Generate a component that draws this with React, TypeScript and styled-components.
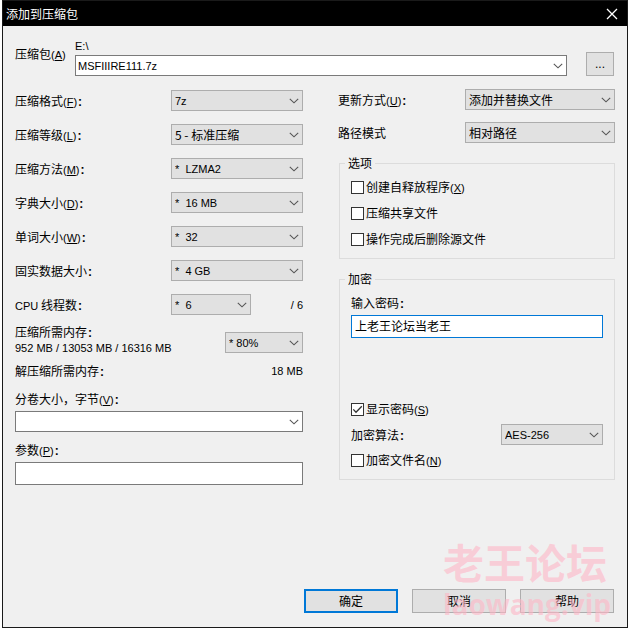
import React, { useState } from "react";
import styled, { createGlobalStyle } from "styled-components";

const cjk = `"Noto Sans CJK SC", sans-serif`;
const latin = `"Liberation Sans", "Noto Sans CJK SC", sans-serif`;

const GlobalStyle = createGlobalStyle`
  *, *::before, *::after { box-sizing: border-box; }
  body {
    margin: 0;
    background: #fff;
    color: #000;
    font: 12px/16px ${cjk};
  }
  button, input, select { font: inherit; color: inherit; margin: 0; border-radius: 0; }
`;

const Page = styled.div`
  display: flex;
  min-height: 100vh;
  padding: 0 2px 2px;
`;

const Dialog = styled.main`
  position: relative;
  flex: 1;
  min-width: 0;
  display: flex;
  flex-direction: column;
  background: #f0f0f0;
  border: 1px solid #1a1a1a;
`;

const TitleBar = styled.header`
  display: flex;
  align-items: center;
  justify-content: space-between;
  height: 25px;
  padding: 0 9px 0 3px;
  background: #000;
  color: #fff;
`;

const Title = styled.h1`
  margin: 0;
  font-size: 12px;
  font-weight: 400;
`;

const CloseButton = styled.button`
  display: flex;
  padding: 0;
  border: 0;
  background: none;
  color: #fff;
`;

const Content = styled.div`
  flex: 1;
  display: flex;
  flex-direction: column;
  padding: 12px;
`;

const ArchiveRow = styled.div`
  display: grid;
  grid-template-columns: 60px minmax(0, 1fr) 28px;
  margin: 0 1px 13px 0;
`;

const ArchiveLabel = styled.label`
  padding-top: 8px;
`;

const PathField = styled.div`
  display: flex;
  flex-direction: column;
  gap: 1px;
  margin-right: 19px;
`;

const Columns = styled.div`
  display: grid;
  grid-template-columns: minmax(0, 288fr) minmax(0, 277fr);
  column-gap: 35px;
`;

const LeftColumn = styled.div`
  display: flex;
  flex-direction: column;
  padding-top: 1px;
`;

const RightColumn = styled.div`
  display: flex;
  flex-direction: column;
  gap: 12px;
`;

const FieldList = styled.div`
  display: flex;
  flex-direction: column;
  gap: 13px;
`;

const Row = styled.div`
  display: flex;
  align-items: center;
  justify-content: space-between;
`;

const CpuControls = styled.div`
  display: flex;
  align-items: center;
  justify-content: space-between;
  width: 132px;
`;

const MemoryRow = styled.div`
  display: flex;
  justify-content: space-between;
  align-items: flex-end;
  margin: 9px 0 7px;
`;

const MemorySelect = styled.div`
  padding-bottom: 3px;
`;

const Stack = styled.div<{ $top: number }>`
  display: flex;
  flex-direction: column;
  gap: 4px;
  margin-top: ${(p) => p.$top}px;
`;

const Latin = styled.span`
  font-family: ${latin};
  font-size: 11px;
  line-height: 8px;
`;

const LatinLine = styled.div`
  font-family: ${latin};
  font-size: 11px;
  line-height: 16px;
`;

const Colon = styled.b`
  font-family: ${latin};
  font-size: 12px;
  line-height: 8px;
  padding-left: 1px;
`;

const SelectFrame = styled.div<{ $width: number }>`
  display: grid;
  align-items: center;
  width: ${(p) => p.$width}px;

  & > * { grid-area: 1 / 1; }
  & > svg { justify-self: end; margin-right: 4px; pointer-events: none; }
`;

const NativeSelect = styled.select<{ $cjk?: boolean }>`
  appearance: none;
  width: 100%;
  height: 21px;
  padding: 0 18px 0 3px;
  border: 1px solid #adadad;
  background: #e1e1e1;
  outline: none;
  font-family: ${(p) => (p.$cjk ? cjk : latin)};
  font-size: ${(p) => (p.$cjk ? 12 : 11)}px;
`;

const TextBox = styled.input<{ $focus?: boolean }>`
  width: 100%;
  height: 23px;
  padding: 0 3px 2px;
  border: 1px solid ${(p) => (p.$focus ? "#0078d7" : "#7a7a7a")};
  background: #fff;
  outline: none;
`;

const ComboFrame = styled.div`
  display: flex;
  height: 21px;
  border: 1px solid #7a7a7a;
  background: #fff;
`;

const ComboInput = styled.input`
  flex: 1;
  min-width: 0;
  padding: 0 2px;
  border: 0;
  outline: none;
  background: none;
  font-family: ${latin};
  font-size: 11px;
`;

const ComboToggle = styled.button`
  display: flex;
  align-items: center;
  padding: 0 3px 0 0;
  border: 0;
  background: none;
`;

const Group = styled.fieldset`
  min-width: 0;
  margin: 0 0 0 1px;
  padding: 8px 11px 11px;
  border: 1px solid #dcdcdc;
`;

const Legend = styled.legend`
  margin-left: -6px;
  padding: 0 3px;
`;

const OptionList = styled.div`
  display: flex;
  flex-direction: column;
  gap: 10px;
`;

const CheckLabel = styled.label`
  display: flex;
  align-items: center;
  gap: 2px;
`;

const CheckFrame = styled.span`
  display: grid;
  width: 13px;
  height: 13px;

  & > * { grid-area: 1 / 1; }
  & > svg { pointer-events: none; }
`;

const NativeCheck = styled.input`
  appearance: none;
  width: 13px;
  height: 13px;
  border: 1px solid #333;
  background: #fff;
`;

const Encryption = styled.div`
  display: flex;
  flex-direction: column;
  gap: 7px;
`;

const PasswordField = styled.div`
  display: flex;
  flex-direction: column;
  gap: 4px;
  margin-bottom: 56px;
`;

const Footer = styled.footer`
  display: flex;
  justify-content: flex-end;
  gap: 14px;
  margin-top: auto;
  padding: 0 1px 2px 0;
`;

const PushButton = styled.button<{ $primary?: boolean }>`
  width: 94px;
  height: 24px;
  padding: 0;
  border: ${(p) => (p.$primary ? "2px solid #0078d7" : "1px solid #adadad")};
  background: #e1e1e1;
`;

const BrowseButton = styled(PushButton)`
  align-self: end;
  width: 28px;
  font-family: ${latin};
`;

const Watermark = styled.div`
  position: absolute;
  right: 16px;
  bottom: 5px;
  display: flex;
  flex-direction: column;
  color: rgba(255, 182, 198, 0.6);
  font-weight: 700;
  white-space: nowrap;
  pointer-events: none;
`;

const WatermarkName = styled.span`
  font-size: 41px;
  line-height: 50px;
`;

const WatermarkSite = styled.span`
  font-family: "Open Sans", sans-serif;
  font-size: 28px;
  line-height: 36px;
`;

const Chevron = () => (
  <svg width="10" height="6" viewBox="0 0 10 6" fill="none" stroke="#555" strokeWidth="1.1" aria-hidden="true">
    <path d="M0.8 0.8 L5 4.8 L9.2 0.8" />
  </svg>
);

const Key = ({ children, colon = true }: { children: string; colon?: boolean }) => (
  <>
    <Latin>
      (<u>{children}</u>)
    </Latin>
    {colon && <Colon>:</Colon>}
  </>
);

interface SelectProps {
  id: string;
  value: string;
  width: number;
  cjk?: boolean;
  label?: string;
}

const Select = ({ id, value, width, cjk: isCjk, label }: SelectProps) => (
  <SelectFrame $width={width}>
    <NativeSelect id={id} $cjk={isCjk} aria-label={label}>
      <option>{value}</option>
    </NativeSelect>
    <Chevron />
  </SelectFrame>
);

interface CheckProps {
  children: React.ReactNode;
  initial?: boolean;
}

const Check = ({ children, initial = false }: CheckProps) => {
  const [checked, setChecked] = useState(initial);
  return (
    <CheckLabel>
      <CheckFrame>
        <NativeCheck type="checkbox" checked={checked} onChange={() => setChecked(!checked)} />
        {checked && (
          <svg width="13" height="13" viewBox="0 0 13 13" fill="none" stroke="#333" strokeWidth="1.3" aria-hidden="true">
            <path d="M2.3 6.4 L5 9.2 L10.8 3.2" />
          </svg>
        )}
      </CheckFrame>
      <span>{children}</span>
    </CheckLabel>
  );
};

const fields = [
  { id: "format", text: "压缩格式", hotkey: "F", value: "7z" },
  { id: "level", text: "压缩等级", hotkey: "L", value: "5 - 标准压缩", cjk: true },
  { id: "method", text: "压缩方法", hotkey: "M", value: "*\u00a0 LZMA2" },
  { id: "dictionary", text: "字典大小", hotkey: "D", value: "*\u00a0 16 MB" },
  { id: "word", text: "单词大小", hotkey: "W", value: "*\u00a0 32" },
  { id: "solid", text: "固实数据大小", value: "*\u00a0 4 GB" },
];

export default function App() {
  const [archive, setArchive] = useState("MSFIIIRE111.7z");
  const [password, setPassword] = useState("上老王论坛当老王");

  return (
    <Page>
      <GlobalStyle />
      <Dialog>
        <TitleBar>
          <Title>添加到压缩包</Title>
          <CloseButton aria-label="关闭">
            <svg width="12" height="12" viewBox="0 0 12 12" fill="none" stroke="currentColor" strokeWidth="1.3">
              <path d="M1 1 L11 11 M11 1 L1 11" />
            </svg>
          </CloseButton>
        </TitleBar>

        <Content>
          <ArchiveRow>
            <ArchiveLabel htmlFor="archive">
              压缩包<Key colon={false}>A</Key>
            </ArchiveLabel>
            <PathField>
              <LatinLine>E:\</LatinLine>
              <ComboFrame>
                <ComboInput id="archive" value={archive} onChange={(e) => setArchive(e.target.value)} />
                <ComboToggle aria-label="展开">
                  <Chevron />
                </ComboToggle>
              </ComboFrame>
            </PathField>
            <BrowseButton>...</BrowseButton>
          </ArchiveRow>

          <Columns>
            <LeftColumn>
              <FieldList>
                {fields.map((f) => (
                  <Row key={f.id}>
                    <label htmlFor={f.id}>
                      {f.text}
                      {f.hotkey ? <Key>{f.hotkey}</Key> : <Colon>:</Colon>}
                    </label>
                    <Select id={f.id} value={f.value} width={132} cjk={f.cjk} />
                  </Row>
                ))}
                <Row>
                  <label htmlFor="threads">
                    <Latin>CPU</Latin> 线程数<Colon>:</Colon>
                  </label>
                  <CpuControls>
                    <Select id="threads" value={"*\u00a0 6"} width={80} />
                    <LatinLine>/ 6</LatinLine>
                  </CpuControls>
                </Row>
              </FieldList>

              <MemoryRow>
                <div>
                  <div>
                    压缩所需内存<Colon>:</Colon>
                  </div>
                  <LatinLine>952 MB / 13053 MB / 16316 MB</LatinLine>
                </div>
                <MemorySelect>
                  <Select id="memory" value="* 80%" width={78} label="压缩所需内存" />
                </MemorySelect>
              </MemoryRow>
              <Row>
                <span>
                  解压缩所需内存<Colon>:</Colon>
                </span>
                <LatinLine>18 MB</LatinLine>
              </Row>

              <Stack $top={12}>
                <label htmlFor="volume">
                  分卷大小，字节<Key>V</Key>
                </label>
                <ComboFrame>
                  <ComboInput id="volume" />
                  <ComboToggle aria-label="展开">
                    <Chevron />
                  </ComboToggle>
                </ComboFrame>
              </Stack>
              <Stack $top={10}>
                <label htmlFor="parameters">
                  参数<Key>P</Key>
                </label>
                <TextBox id="parameters" />
              </Stack>
            </LeftColumn>

            <RightColumn>
              <Row>
                <label htmlFor="update">
                  更新方式<Key>U</Key>
                </label>
                <Select id="update" value="添加并替换文件" width={150} cjk />
              </Row>
              <Row>
                <label htmlFor="paths">路径模式</label>
                <Select id="paths" value="相对路径" width={150} cjk />
              </Row>

              <Group>
                <Legend>选项</Legend>
                <OptionList>
                  <Check>
                    创建自释放程序<Key colon={false}>X</Key>
                  </Check>
                  <Check>压缩共享文件</Check>
                  <Check>操作完成后删除源文件</Check>
                </OptionList>
              </Group>

              <Group>
                <Legend>加密</Legend>
                <Encryption>
                  <PasswordField>
                    <label htmlFor="password">
                      输入密码<Colon>:</Colon>
                    </label>
                    <TextBox
                      id="password"
                      $focus
                      value={password}
                      onChange={(e) => setPassword(e.target.value)}
                    />
                  </PasswordField>
                  <Check initial>
                    显示密码<Key colon={false}>S</Key>
                  </Check>
                  <Row>
                    <label htmlFor="algorithm">
                      加密算法<Colon>:</Colon>
                    </label>
                    <Select id="algorithm" value="AES-256" width={102} />
                  </Row>
                  <Check>
                    加密文件名<Key colon={false}>N</Key>
                  </Check>
                </Encryption>
              </Group>
            </RightColumn>
          </Columns>

          <Footer>
            <PushButton $primary>确定</PushButton>
            <PushButton>取消</PushButton>
            <PushButton>帮助</PushButton>
          </Footer>
        </Content>

        <Watermark aria-hidden="true">
          <WatermarkName>老王论坛</WatermarkName>
          <WatermarkSite>laowang.vip</WatermarkSite>
        </Watermark>
      </Dialog>
    </Page>
  );
}
